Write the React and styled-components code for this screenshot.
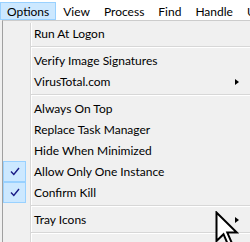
import styled, { createGlobalStyle } from "styled-components";

const Global = createGlobalStyle`
    html, body {
        margin: 0;
        padding: 0;
        background: #f0f0f0;
        overflow: hidden;
    }
    body {
        font-family: Lato, "Noto Sans", sans-serif;
        font-size: 12px;
        color: #000;
    }
`;

const Screen = styled.div`
    position: relative;
    width: 250px;
    height: 242px;
    overflow: hidden;
`;

const MenuBar = styled.div`
    display: flex;
    height: 20px;
    background: #fff;
`;

const BarItem = styled.div`
    display: flex;
    align-items: center;
    height: 16px;
    margin-top: 2px;
    padding: 0 6px;
    border: 1px solid ${(p) => (p.active ? "#99d1ff" : "transparent")};
    background: ${(p) => (p.active ? "#cce8ff" : "transparent")};
    white-space: nowrap;
`;

const Below = styled.div`
    padding-left: 2px;
`;

const Dropdown = styled.div`
    width: 270px;
    padding-top: 2px;
    border-left: 1px solid #a0a0a0;
    border-top: 1px solid #cccccc;
    background: #f0f0f0;
`;

const Row = styled.div`
    display: grid;
    grid-template-columns: 28px 1fr 20px;
    height: 21px;
    align-items: center;
`;

const Gutter = styled.div`
    display: flex;
    align-items: center;
    height: 100%;
    border-right: 1px solid #d7d7d7;
    box-shadow: 1px 0 0 #fff;
`;

const Check = styled.div`
    display: flex;
    align-items: center;
    justify-content: center;
    width: 21px;
    height: 19px;
    background: #cce8ff;
    border: 1px solid #99d1ff;
`;

const Label = styled.div`
    padding-left: 3px;
    white-space: nowrap;
`;

const Arrow = styled.div`
    width: 0;
    height: 0;
    border-top: 3.5px solid transparent;
    border-bottom: 3.5px solid transparent;
    border-left: 4px solid #000;
    margin-left: -18px;
`;

const Separator = styled.div`
    display: grid;
    grid-template-columns: 28px 1fr;
    height: 6px;
`;

const SepLine = styled.div`
    margin-top: 2px;
    height: 1px;
    background: #d7d7d7;
    border-bottom: 1px solid #fff;
`;

const Cursor = styled.svg`
    position: absolute;
    left: 215px;
    top: 211px;
`;

const items = [
    { label: "Run At Logon" },
    "sep",
    { label: "Verify Image Signatures" },
    { label: "VirusTotal.com", sub: true },
    "sep",
    { label: "Always On Top" },
    { label: "Replace Task Manager" },
    { label: "Hide When Minimized" },
    { label: "Allow Only One Instance", checked: true },
    { label: "Confirm Kill", checked: true },
    "sep",
    { label: "Tray Icons", sub: true },
    "sep",
    { label: "Configure Symbols..." },
];

export default function App() {
    return (
        <Screen>
            <Global />
            <MenuBar>
                <BarItem active>Options</BarItem>
                <BarItem>View</BarItem>
                <BarItem>Process</BarItem>
                <BarItem>Find</BarItem>
                <BarItem>Handle</BarItem>
                <BarItem>Users</BarItem>
            </MenuBar>
            <Below>
                <Dropdown>
                    {items.map((it, i) =>
                        it === "sep" ? (
                            <Separator key={i}>
                                <Gutter />
                                <SepLine />
                            </Separator>
                        ) : (
                            <Row key={i}>
                                <Gutter>
                                    {it.checked && (
                                        <Check>
                                            <svg width="10" height="9" viewBox="0 0 10 9">
                                                <path
                                                    d="M1 4.5 L3.8 7.5 L9 1"
                                                    fill="none"
                                                    stroke="#1b1b86"
                                                    strokeWidth="1.4"
                                                />
                                            </svg>
                                        </Check>
                                    )}
                                </Gutter>
                                <Label>{it.label}</Label>
                                {it.sub ? <Arrow /> : <span />}
                            </Row>
                        )
                    )}
                </Dropdown>
            </Below>
            <Cursor width="30" height="40" viewBox="0 0 30 40">
                <path
                    d="M1.5 1.5 L1.5 30 L8.5 23.2 L13.6 35 L17.4 33.3 L12.3 21.6 L21.8 21.6 Z"
                    fill="#fff"
                    stroke="#000"
                    strokeWidth="2"
                    strokeLinejoin="miter"
                />
            </Cursor>
        </Screen>
    );
}
